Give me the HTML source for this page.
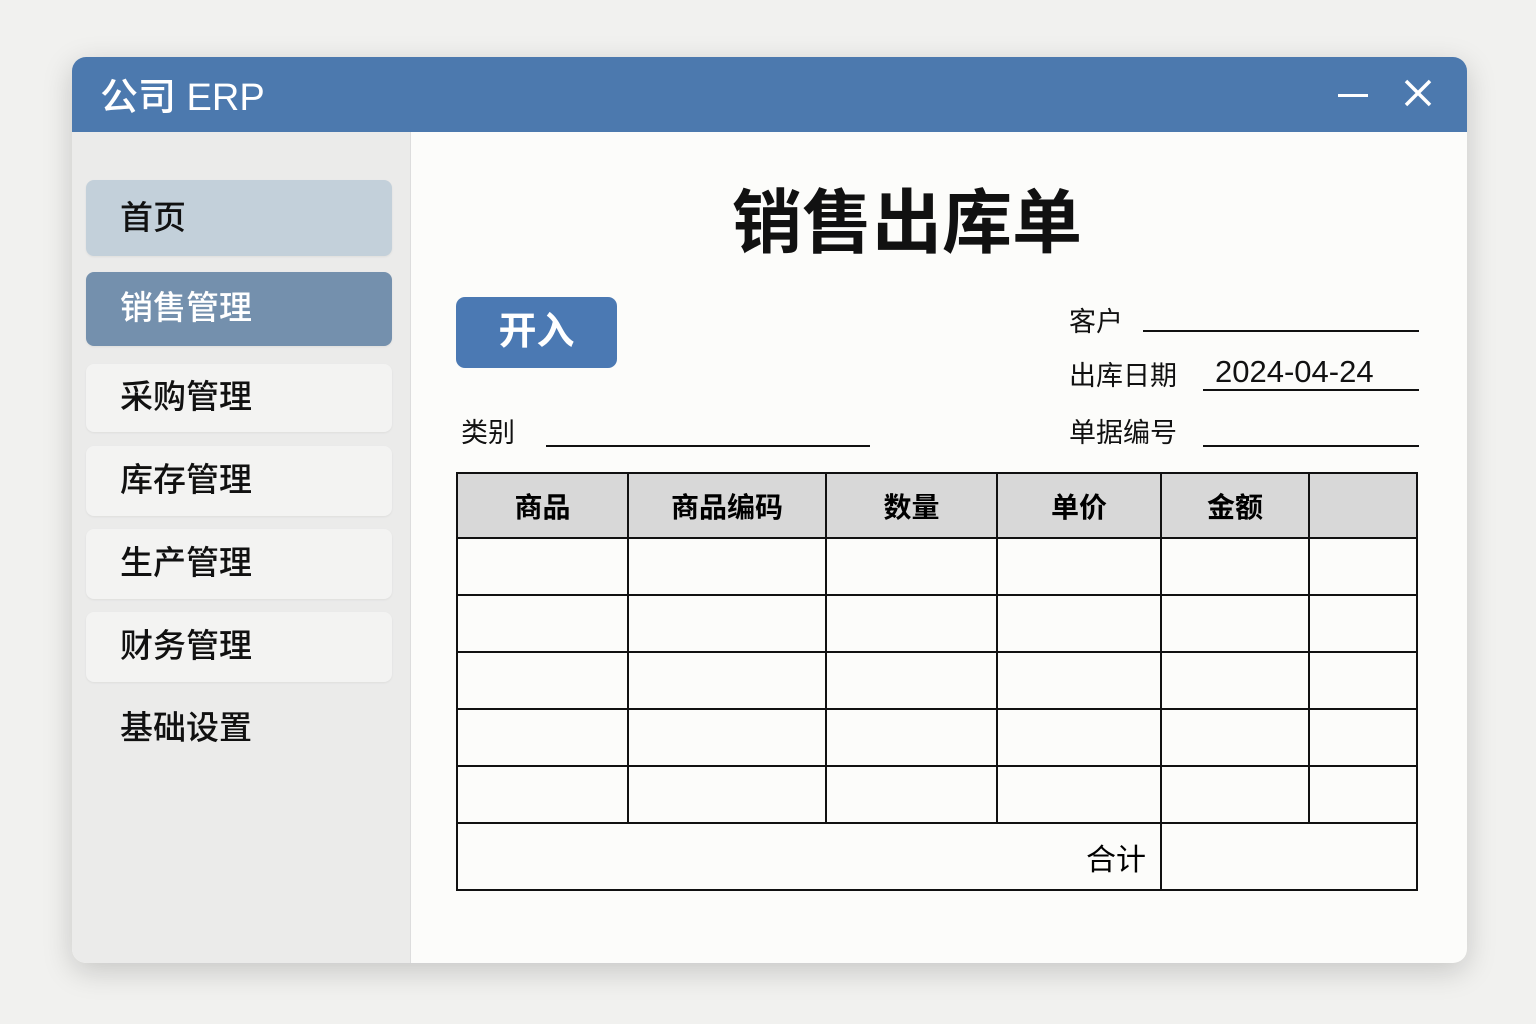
<!DOCTYPE html><html><head><meta charset="utf-8"><style>
*{margin:0;padding:0;box-sizing:border-box}
body{width:1536px;height:1024px;background:#f1f1ef;font-family:"Liberation Sans","Noto Sans CJK SC",sans-serif;position:relative;overflow:hidden}
.a{position:absolute}
.win{left:72px;top:57px;width:1395px;height:906px;border-radius:14px;overflow:hidden;background:#fcfcfa;box-shadow:0 8px 30px rgba(0,0,0,.18)}
.tb{left:0;top:0;width:1395px;height:75px;background:#4c79ae;color:#fff;font-size:38px;padding:9px 0 0 28px;font-weight:500}
.sb{left:0;top:75px;width:339px;height:831px;background:#ebebea;border-right:1px solid #ddd}
.it{left:14px;width:306px;border-radius:8px;background:#f3f3f2;font-size:33px;padding-left:34px;color:#111;box-shadow:0 1px 2px rgba(0,0,0,.06);font-weight:500}
.lbl{font-size:27px;color:#111}
.ln{height:2px;background:#111}
table{position:absolute;left:456px;top:472px;border-collapse:collapse;width:962px}
td{border:2px solid #111;font-size:28px;text-align:center;height:57px}
tr.h td{background:#d8d8d8;height:65px;font-weight:bold}
</style></head><body>
<div class="a win">
<div class="a tb">公司 ERP</div>
<div class="a" style="left:1266px;top:37px;width:30px;height:3px;background:#fff"></div>
<svg class="a" style="left:1332px;top:22px" width="28" height="28"><path d="M2 2L26 26M26 2L2 26" stroke="#fff" stroke-width="3.5"/></svg>
<div class="a sb">
<div class="a it" style="top:48px;height:76px;line-height:76px;background:#c3d0da">首页</div>
<div class="a it" style="top:140px;height:74px;line-height:72px;background:#7490ad;color:#fff">销售管理</div>
<div class="a it" style="top:232px;height:68px;line-height:66px">采购管理</div>
<div class="a it" style="top:314px;height:70px;line-height:68px">库存管理</div>
<div class="a it" style="top:397px;height:70px;line-height:68px">生产管理</div>
<div class="a it" style="top:480px;height:70px;line-height:68px">财务管理</div>
<div class="a it" style="top:562px;height:68px;line-height:68px;background:none;box-shadow:none">基础设置</div>
</div>
</div>
<div class="a" style="left:600px;top:167px;width:614px;text-align:center;font-size:70px;font-weight:bold;color:#111">销售出库单</div>
<div class="a" style="left:456px;top:297px;width:161px;height:71px;border-radius:9px;background:#4b79b3;color:#fff;font-size:38px;font-weight:bold;text-align:center;line-height:71px">开入</div>
<div class="a lbl" style="left:1069px;top:300px">客户</div>
<div class="a ln" style="left:1143px;top:330px;width:276px"></div>
<div class="a lbl" style="left:1069px;top:354px">出库日期</div>
<div class="a" style="left:1215px;top:354px;font-size:31px;color:#111">2024-04-24</div>
<div class="a ln" style="left:1203px;top:389px;width:216px"></div>
<div class="a lbl" style="left:1069px;top:411px">单据编号</div>
<div class="a ln" style="left:1203px;top:445px;width:216px"></div>
<div class="a lbl" style="left:461px;top:411px">类别</div>
<div class="a ln" style="left:546px;top:445px;width:324px"></div>
<table>
<tr class="h"><td style="width:171px">商品</td><td style="width:198px">商品编码</td><td style="width:171px">数量</td><td style="width:164px">单价</td><td style="width:148px">金额</td><td></td></tr>
<tr><td></td><td></td><td></td><td></td><td></td><td></td></tr>
<tr><td></td><td></td><td></td><td></td><td></td><td></td></tr>
<tr><td></td><td></td><td></td><td></td><td></td><td></td></tr>
<tr><td></td><td></td><td></td><td></td><td></td><td></td></tr>
<tr><td></td><td></td><td></td><td></td><td></td><td></td></tr>
<tr><td colspan="4" style="height:67px;text-align:right;padding-right:14px;font-size:30px">合计</td><td colspan="2"></td></tr>
</table>
</body></html>
